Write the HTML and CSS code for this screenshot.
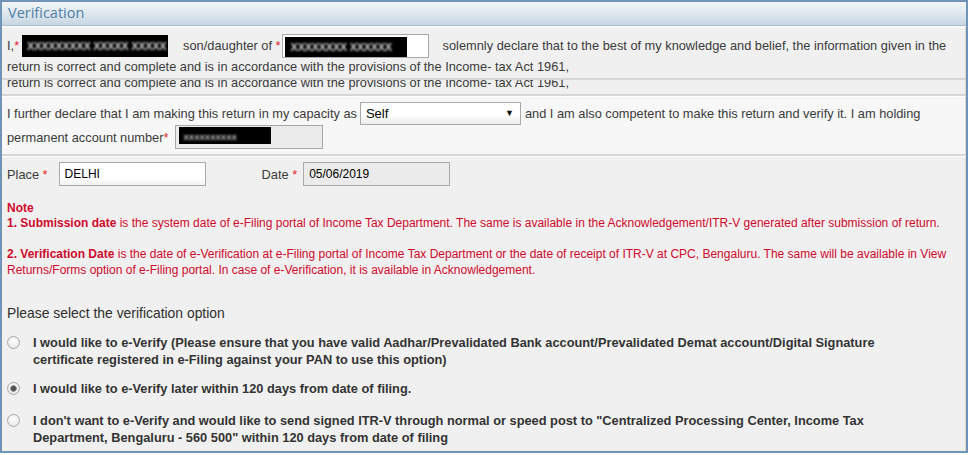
FILE: index.html
```html
<!DOCTYPE html>
<html>
<head>
<meta charset="utf-8">
<title>Verification</title>
<link rel="stylesheet" href="styles.css">
</head>
<body>
<div class="panel">
  <div class="head">Verification</div>

  <div class="row row1">
    <div class="fline">
      <span>I,<span class="req">*</span></span>
      <span class="redact r-name"><span class="noise">XXXXXXXXX XXXXX XXXXX</span></span>
      <span class="lbl-son">son/daughter of <span class="req">*</span></span>
      <span class="box box-father"><span class="redact r-father"><span class="noise">XXXXXXXX XXXXXX</span></span></span>
      <span class="lbl-solemn">solemnly declare that to the best of my knowledge and belief, the information given in the</span>
    </div>
    <div class="tline">return is correct and complete and is in accordance with the provisions of the Income- tax Act 1961,</div>
  </div>

  <div class="row row1b">
    <div class="clipline">return is correct and complete and is in accordance with the provisions of the Income- tax Act 1961,</div>
  </div>

  <div class="row row2">
    <div class="fline fline2">
      <span>I further declare that I am making this return in my capacity as</span>
      <span class="select"><select class="sel"><option>Self</option></select></span>
      <span class="lbl-comp">and I am also competent to make this return and verify it. I am holding</span>
    </div>
    <div class="fline fline3">
      <span>permanent account number<span class="req">*</span></span>
      <span class="box box-pan"><span class="redact r-pan"><span class="noise small">XXXXXXXXXX</span></span></span>
    </div>
  </div>

  <div class="row row3">
    <div class="fline place">
      <span class="lbl-place">Place <span class="req">*</span></span>
      <input class="field" type="text" value="DELHI">
      <span class="lbl-date">Date <span class="req">*</span></span>
      <input class="field field-ro" type="text" value="05/06/2019" readonly>
    </div>

    <div class="note">
      <div class="note-title">Note</div>
      <div class="note-p1"><b>1. Submission date</b> is the system date of e-Filing portal of Income Tax Department. The same is available in the Acknowledgement/ITR-V generated after submission of return.</div>
      <div class="note-p2"><b>2. Verification Date</b> is the date of e-Verification at e-Filing portal of Income Tax Department or the date of receipt of ITR-V at CPC, Bengaluru. The same will be available in View<br>Returns/Forms option of e-Filing portal. In case of e-Verification, it is available in Acknowledgement.</div>
    </div>

    <div class="opt-head">Please select the verification option</div>

    <div class="options">
      <label class="opt">
        <input class="radio" type="radio" name="verify">
        <span class="opt-text">I would like to e-Verify (Please ensure that you have valid Aadhar/Prevalidated Bank account/Prevalidated Demat account/Digital Signature<br>certificate registered in e-Filing against your PAN to use this option)</span>
      </label>
      <label class="opt opt2">
        <input class="radio" type="radio" name="verify" checked>
        <span class="opt-text">I would like to e-Verify later within 120 days from date of filing.</span>
      </label>
      <label class="opt opt3">
        <input class="radio" type="radio" name="verify">
        <span class="opt-text">I don't want to e-Verify and would like to send signed ITR-V through normal or speed post to "Centralized Processing Center, Income Tax<br>Department, Bengaluru - 560 500" within 120 days from date of filing</span>
      </label>
    </div>
  </div>
</div>
</body>
</html>
```

FILE: styles.css
```css
* { box-sizing: border-box; }

html, body {
  margin: 0;
  padding: 0;
  background: #ffffff;
}

body {
  font-family: "Liberation Sans", Arial, sans-serif;
  font-size: 12.8px;
  color: #3b3b3b;
}

.panel {
  width: 968px;
  height: 453px;
  border: 2px solid #7193b6;
  display: flex;
  flex-direction: column;
  overflow: hidden;
  background: #f0f0f0;
}

.head {
  flex: none;
  height: 24px;
  border-bottom: 1px solid #a9bfd1;
  background: linear-gradient(#f2f5f8, #dfe7ee 50%, #c6d6e2);
  color: #4f7fa5;
  font-family: "Open Sans", "DejaVu Sans", sans-serif;
  font-size: 14.5px;
  line-height: 22px;
  padding-left: 6px;
}

.row {
  flex: none;
  border-top: 2px solid #fafafa;
  border-bottom: 2px solid #d6d6d6;
  border-right: 1px solid #d9d9d9;
  padding-left: 5px;
  white-space: nowrap;
}

.row1 { background: #f0f0f0; padding-top: 5px; height: 54px; }
.row1b { background: #f0f0f0; height: 16px; border-top: 0; overflow: hidden; }
.row2 { background: #f7f7f7; border-top: 1px solid #ffffff; padding-top: 5px; height: 60px; }
.row3 { background: #f0f0f0; border-top: 1px solid #ffffff; border-bottom: 0; flex: 1; padding-top: 5px; }

.fline {
  display: flex;
  align-items: center;
  height: 25px;
}

.tline {
  height: 20px;
  line-height: 18px;
}

.clipline {
  line-height: 20px;
  margin-top: -7px;
}

.req { color: #e0262d; }

.redact {
  display: inline-block;
  background: #000;
  overflow: hidden;
  white-space: nowrap;
}

.noise {
  display: inline-block;
  color: #cfcfcf;
  font-size: 11px;
  font-weight: bold;
  letter-spacing: -0.3px;
  filter: blur(1px);
}

.noise.small { font-size: 8px; letter-spacing: 0; }

.r-name {
  width: 146px;
  height: 22px;
  margin-left: 3px;
  line-height: 22px;
  padding-left: 5px;
}

.lbl-son { margin-left: 15px; }

.box {
  display: inline-block;
  border: 1px solid #a9a9a9;
  height: 24px;
}

.box-father {
  width: 147px;
  margin-left: 1px;
  background: #ffffff;
  padding: 2px 0 0 2px;
}

.r-father {
  width: 122px;
  height: 20px;
  line-height: 20px;
  padding-left: 6px;
}

.lbl-solemn { margin-left: 14px; }

.fline2 { height: 23px; }
.fline3 { height: 24px; }

.select {
  position: relative;
  display: inline-block;
  margin-left: 3px;
  height: 23px;
}

.select::after {
  content: "\25BC";
  position: absolute;
  right: 7px;
  top: 6px;
  font-size: 9px;
  color: #111;
  pointer-events: none;
}

.sel {
  appearance: none;
  -webkit-appearance: none;
  width: 161px;
  height: 23px;
  margin: 0;
  border: 1px solid #a9a9a9;
  border-radius: 0;
  background: linear-gradient(#ffffff, #ffffff 55%, #ececec);
  font-family: "Liberation Sans", Arial, sans-serif;
  font-size: 13px;
  color: #000;
  padding: 0 0 0 5px;
  outline: none;
}

.lbl-comp { margin-left: 4px; }

.box-pan {
  width: 148px;
  height: 24px;
  margin-left: 7px;
  background: #ebebeb;
  padding: 1px 0 0 3px;
}

.r-pan {
  width: 92px;
  height: 17px;
  line-height: 17px;
  padding-left: 4px;
}

.place { height: 24px; }

.field {
  width: 147px;
  height: 24px;
  margin: 0 0 0 11px;
  border: 1px solid #a9a9a9;
  border-radius: 0;
  background: linear-gradient(#ffffff, #ffffff 70%, #f1f1f1);
  font-family: "Liberation Sans", Arial, sans-serif;
  font-size: 12px;
  color: #000;
  padding: 0 0 0 5px;
  outline: none;
}

.field-ro {
  background: #ebebeb;
  margin-left: 6px;
}

.lbl-date { margin-left: 56px; }

.note {
  margin-top: 14px;
  color: #cf0a2c;
  font-size: 12px;
}

.note-title {
  font-weight: bold;
  line-height: 16px;
}

.note-p1 { line-height: 15px; }

.note-p2 {
  margin-top: 15px;
  line-height: 16px;
}

.opt-head {
  margin-top: 26px;
  line-height: 18px;
  color: #2e2e2e;
  font-size: 13.9px;
}

.options {
  margin-top: 12px;
  display: flex;
  flex-direction: column;
}

.opt {
  display: flex;
  align-items: flex-start;
  color: #333;
  font-size: 12.8px;
  font-weight: bold;
  line-height: 17px;
}

.opt2 { margin-top: 12px; }
.opt3 { margin-top: 15px; }

.radio {
  appearance: none;
  -webkit-appearance: none;
  flex: none;
  width: 13px;
  height: 13px;
  margin: 2px 13px 0 0;
  border: 1px solid #a8a8a8;
  border-radius: 50%;
  background: radial-gradient(circle at 50% 35%, #ffffff, #e1e1e1);
}

.radio:checked {
  background:
    radial-gradient(circle, #4a4a4a 0, #555 2px, #8d8d8d 3px, rgba(0,0,0,0) 3.6px),
    radial-gradient(circle at 50% 35%, #ffffff, #e1e1e1);
}
```
